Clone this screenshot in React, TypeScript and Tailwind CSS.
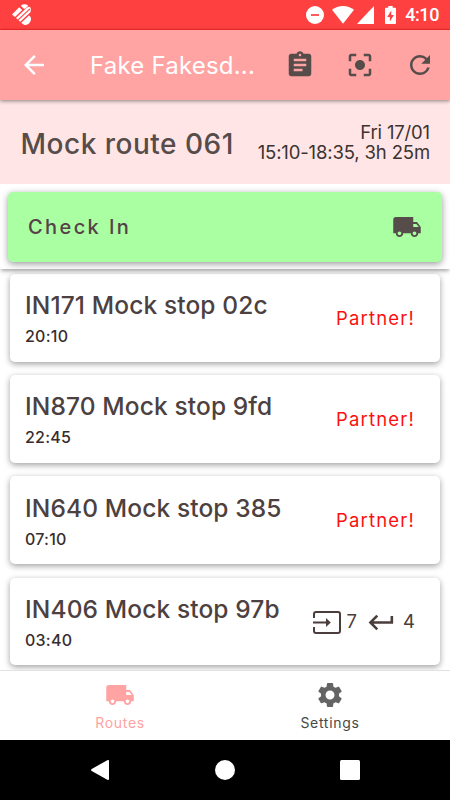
import {
  MdArrowBack,
  MdAssignment,
  MdCenterFocusStrong,
  MdKeyboardReturn,
  MdLocalShipping,
  MdRefresh,
  MdSettings,
} from "react-icons/md"

type Stop = {
  name: string
  time: string
  partner?: boolean
  pickups?: number
  returns?: number
}

const stops: Stop[] = [
  { name: "IN171 Mock stop 02c", time: "20:10", partner: true },
  { name: "IN870 Mock stop 9fd", time: "22:45", partner: true },
  { name: "IN640 Mock stop 385", time: "07:10", partner: true },
  { name: "IN406 Mock stop 97b", time: "03:40", pickups: 7, returns: 4 },
]

function StatusBar() {
  return (
    <div className="flex h-[30px] shrink-0 items-center border-b border-[#ff2c2c] bg-[#ff4040] pl-3 pr-[11px] text-white">
      <svg width="19" height="21" viewBox="0 0 19 21" fill="currentColor">
        <path d="M0 10.400 7.200 3.300 10.200 6 3 13z" />
        <path d="M8.800 1.700Q12.500-1.200 16.200 1.700L13.400 4.400Q12.400 5.200 11.300 4.200z" />
        <path d="M4 14 14.400 3.900Q18.800 1 18.900 5.400 19 7.600 17.600 9L8.200 17.800z" />
        <path d="M9.300 18.800 17 11.500Q20 13.500 18.600 17 16.900 21 12.500 20.900 10.700 20.300 9.300 18.800z" />
        <path d="M5.900 16.100 17.900 4.800" stroke="#ff4040" strokeWidth="1.1" />
      </svg>
      <div className="ml-auto flex items-center">
        <svg width="18" height="18" viewBox="0 0 18 18">
          <circle cx="9" cy="9" r="9" fill="#fff" />
          <path d="M5 9h8" stroke="#ff4040" strokeWidth="1.7" />
        </svg>
        <svg className="ml-[8px]" width="22" height="18" viewBox="0 0 22 18" fill="currentColor">
          <path d="M11 17.700 0 3.800Q4.800 0 11 0T22 3.800z" />
        </svg>
        <svg className="ml-[3px]" width="17" height="18" viewBox="0 0 17 18" fill="currentColor">
          <path d="M0 18 17 0V18z" />
        </svg>
        <svg className="ml-[11px]" width="11" height="18" viewBox="0 0 11 18">
          <path d="M3.300 0h4.400v1.800H10q1 0 1 1V17q0 1-1 1H1q-1 0-1-1V2.800q0-1 1-1h2.300z" fill="#fff" />
          <path d="M6.300 4.500 2.200 11h2.700v4.500L8.900 9H6.300z" fill="#ff4040" />
        </svg>
        <span className="ml-[9px] mt-px font-['Roboto',sans-serif] text-[18px] leading-none font-medium tracking-[-0.4px]">
          4:10
        </span>
      </div>
    </div>
  )
}

function AppBar() {
  return (
    <header className="relative z-10 flex h-[70px] shrink-0 items-center bg-[#ffa3a3] pl-[19px] pr-[15px] shadow-[0_1px_4px_rgba(0,0,0,0.45)]">
      <MdArrowBack className="size-[30px] shrink-0 text-white" />
      <h1 className="ml-[41px] pt-[2px] text-[24px] leading-none tracking-[0.2px] whitespace-nowrap text-white">
        Fake Fakesd...
      </h1>
      <div className="ml-auto flex items-center gap-[30px] text-[#564c4a]">
        <MdAssignment className="size-[30px]" />
        <MdCenterFocusStrong className="size-[30px]" />
        <MdRefresh className="size-[30px]" />
      </div>
    </header>
  )
}

function RouteSummary() {
  return (
    <section className="flex h-[84px] shrink-0 items-center justify-between bg-[#ffe5e5] pl-[20.5px] pr-[20px]">
      <h2 className="pt-[3px] text-[28px] font-medium tracking-[0.5px] whitespace-nowrap text-[#564c4a]">
        Mock route 061
      </h2>
      <div className="text-right text-[18.5px] leading-[20px] tracking-[-0.15px] whitespace-nowrap text-[#3a3332]">
        <p>Fri 17/01</p>
        <p>15:10-18:35, 3h 25m</p>
      </div>
    </section>
  )
}

// Same outline as the material "input" icon, with a lighter frame
function PickupIcon() {
  return (
    <svg width="28" height="23" viewBox="0 0 28 23" fill="none" stroke="currentColor" strokeWidth="2">
      <path d="M1 7V3Q1 1 3 1H25Q27 1 27 3V20Q27 22 25 22H3Q1 22 1 20V16" />
      <path d="M0 11.500H14" />
      <path d="M13 7 17.800 11.500 13 16z" fill="currentColor" stroke="none" />
    </svg>
  )
}

function StopCard({ stop }: { stop: Stop }) {
  return (
    <li className="flex h-[87.5px] shrink-0 items-center justify-between rounded-[5px] bg-white pl-[15px] pr-[25px] shadow-[0_2px_6px_rgba(0,0,0,0.38)]">
      <div className="pt-[5px] whitespace-nowrap">
        <h3 className="text-[24.5px] leading-[32px] font-medium tracking-[0.12px] text-[#4c4140]">{stop.name}</h3>
        <p className="text-[16px] leading-[30px] font-medium tracking-[0.25px] text-[#382c2c]">{stop.time}</p>
      </div>
      {stop.partner ? (
        <span className="pt-[2px] text-[18.5px] tracking-[1.2px] text-[#fd1010]">Partner!</span>
      ) : (
        <div className="flex items-center pt-[2px] text-[18.5px] text-[#4c3d3d]">
          <PickupIcon />
          <span className="ml-[6px]">{stop.pickups}</span>
          <MdKeyboardReturn className="ml-[9px] size-[31px]" />
          <span className="ml-[6px]">{stop.returns}</span>
        </div>
      )}
    </li>
  )
}

function TabBar() {
  return (
    <nav className="relative z-10 grid h-[70px] shrink-0 grid-cols-2 border-t border-[#e2e2e2] bg-white px-[15px] text-[14px] leading-[18px] tracking-[0.7px]">
      <a className="flex flex-col items-center pt-[9px] text-[#ffa3a3]">
        <MdLocalShipping className="size-[30px]" />
        <span className="mt-[4px]">Routes</span>
      </a>
      <a className="flex flex-col items-center pt-[9px] text-[#484848]">
        <MdSettings className="size-[30px] text-[#646464]" />
        <span className="mt-[4px]">Settings</span>
      </a>
    </nav>
  )
}

function SystemNav() {
  return (
    <div className="flex h-[60px] shrink-0 items-center bg-black pl-[91px] text-white">
      <svg width="18" height="20" viewBox="0 0 18 20" fill="currentColor">
        <path d="M16.300.2Q18-.5 18 1V19Q18 20.500 16.300 19.700L.7 10.900Q-.5 10 .7 9.100z" />
      </svg>
      <span className="ml-[106px] size-[20px] rounded-full bg-white" />
      <span className="ml-[105px] size-[20px] rounded-[1.5px] bg-white" />
    </div>
  )
}

export default function App() {
  return (
    <div className="flex h-[800px] w-[450px] flex-col overflow-hidden bg-white font-['Inter','Liberation_Sans',sans-serif]">
      <StatusBar />
      <AppBar />
      <RouteSummary />
      <div className="relative z-[5] shrink-0 bg-white px-2 pt-[7.5px] pb-[7.5px] shadow-[0_3px_4px_-1px_rgba(0,0,0,0.35)]">
        <button className="flex h-[70px] w-full items-center justify-between rounded-[5px] bg-[#a9ffa1] pl-[20px] pr-[20px] text-[#564148] shadow-[0_2px_7px_rgba(0,0,0,0.4)]">
          <span className="text-[20px] font-medium tracking-[2.4px]">Check In</span>
          <MdLocalShipping className="size-[30px] text-[#564c4a]" />
        </button>
      </div>
      <ul className="flex min-h-0 flex-1 flex-col gap-[13.7px] overflow-hidden px-[10px] pt-[5px]">
        {stops.map((stop) => (
          <StopCard key={stop.name} stop={stop} />
        ))}
      </ul>
      <TabBar />
      <SystemNav />
    </div>
  )
}
